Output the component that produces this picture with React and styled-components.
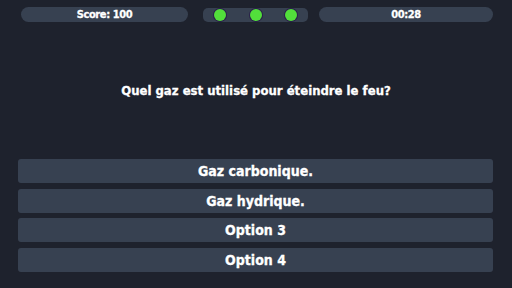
import React from 'react'
import styled, {createGlobalStyle} from 'styled-components'

const GlobalStyle = createGlobalStyle`
html, body {
    margin: 0;
    padding: 0;
    background: #1e222d;
}
body {
    font-family: 'DejaVu Sans Condensed', 'DejaVu Sans', sans-serif;
    font-weight: bold;
    color: #ffffff;
    -webkit-text-stroke: 0.3px #ffffff;
}
`

const Screen = styled.div`
width: 512px;
height: 288px;
display: flex;
flex-direction: column;
background: #1e222d;
`

const TopBar = styled.div`
display: flex;
align-items: center;
padding: 7px 19px 0 21px;
`

const Pill = styled.div`
height: 15px;
width: ${props => props.w}px;
border-radius: 8px;
background: #374151;
display: flex;
align-items: center;
justify-content: center;
font-size: 11px;
letter-spacing: -0.4px;
`

const Dots = styled.div`
height: 14px;
width: 105px;
margin: 0 11px 0 15px;
border-radius: 5px;
background: #374151;
display: flex;
align-items: center;
justify-content: space-between;
padding: 0 11px;
box-sizing: border-box;
`

const Dot = styled.span`
width: 12px;
height: 12px;
border-radius: 50%;
background: #52df3b;
box-shadow: 0 0 0 1px #2a1f4a;
`

const Question = styled.div`
text-align: center;
font-size: 13px;
margin-top: 61px;
`

const Answers = styled.div`
display: flex;
flex-direction: column;
gap: 5.5px;
padding: 0 19px 0 18px;
margin-top: 61px;
`

const Answer = styled.div`
height: 24px;
border-radius: 3px;
background: #374151;
display: flex;
align-items: center;
justify-content: center;
font-size: 14px;
`

export default function App() {
    const answers = ['Gaz carbonique.', 'Gaz hydrique.', 'Option 3', 'Option 4']
    return (
        <Screen>
            <GlobalStyle />
            <TopBar>
                <Pill w={167}>Score: 100</Pill>
                <Dots>
                    <Dot />
                    <Dot />
                    <Dot />
                </Dots>
                <Pill w={174}>00:28</Pill>
            </TopBar>
            <Question>Quel gaz est utilisé pour éteindre le feu?</Question>
            <Answers>
                {answers.map(a => <Answer key={a}>{a}</Answer>)}
            </Answers>
        </Screen>
    )
}
